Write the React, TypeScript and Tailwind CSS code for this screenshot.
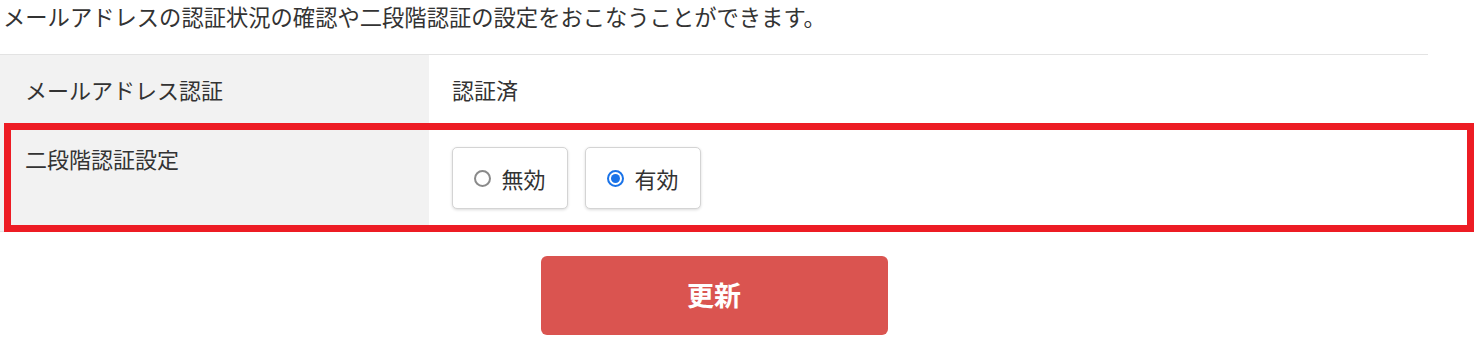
import React from 'react';

const font = "font-['Noto_Sans_CJK_JP','Noto_Sans',sans-serif]";

function Radio({ checked, label }: { checked?: boolean; label: string }) {
  return (
    <label className="flex h-[62px] w-[116px] items-center justify-center gap-[10px] rounded-[5px] border border-[#d4d4d4] bg-white shadow-[0_1px_3px_rgba(0,0,0,0.15)]">
      {checked ? (
        <span className="flex h-[17px] w-[17px] shrink-0 items-center justify-center rounded-full border-2 border-[#1a73e8]">
          <span className="h-[9px] w-[9px] rounded-full bg-[#1a73e8]" />
        </span>
      ) : (
        <span className="h-[17px] w-[17px] shrink-0 rounded-full border-2 border-[#8a8a8a]" />
      )}
      <span className="text-[22px] leading-none">{label}</span>
    </label>
  );
}

export default function App() {
  return (
    <div className={`relative h-[341px] w-[1478px] overflow-hidden bg-white text-[#333] ${font}`}>
      <p className="pl-[3px] text-[22.3px] leading-[32px]">
        メールアドレスの認証状況の確認や二段階認証の設定をおこなうことができます。
      </p>

      <div className="mt-[22px] w-[1428px] border-y border-[#e3e3e3]">
        <div className="grid grid-cols-[429px_1fr]">
          <div className="flex h-[68px] items-center bg-[#f2f2f2] pl-[25px] text-[22px]">メールアドレス認証</div>
          <div className="flex h-[68px] items-center pl-[23px] text-[22px]">認証済</div>
        </div>
        <div className="grid grid-cols-[429px_1fr]">
          <div className="h-[108px] bg-[#f2f2f2] pl-[25px] pt-[20px] text-[22px] leading-[30px]">二段階認証設定</div>
          <div className="flex gap-[17px] pl-[23px] pt-[24px]">
            <Radio label="無効" />
            <Radio label="有効" checked />
          </div>
        </div>
      </div>

      <div className="mt-[24px] flex w-[1428px] justify-center">
        <button className="h-[79px] w-[347px] rounded-[6px] bg-[#da5450] text-[27px] font-bold text-white">
          更新
        </button>
      </div>

      <div className="pointer-events-none absolute left-[4px] top-[123px] h-[109px] w-[1470px] border-[7px] border-[#ed1c24]" />
    </div>
  );
}
